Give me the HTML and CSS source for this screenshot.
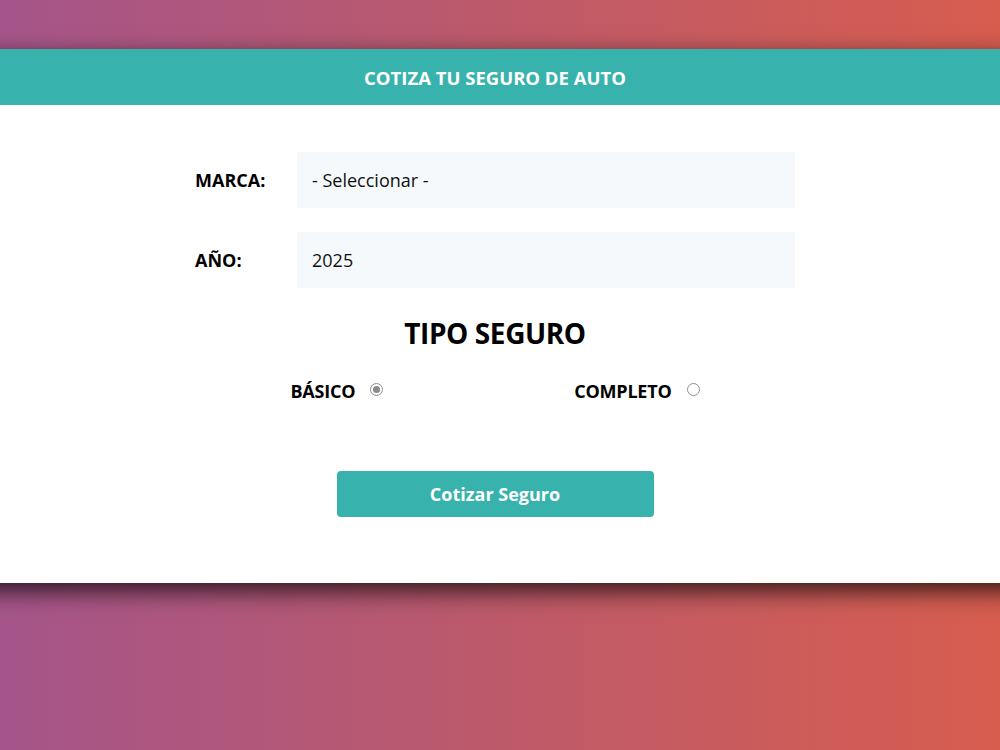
FILE: index.html
```html
<!DOCTYPE html>
<html lang="es">
<head>
<meta charset="utf-8">
<title>Cotizador</title>
<link rel="stylesheet" href="styles.css">
</head>
<body>
<div class="container">
  <header class="header">
    <h1>COTIZA TU SEGURO DE AUTO</h1>
  </header>
  <form class="form">
    <div class="field">
      <label class="label" for="marca">MARCA:</label>
      <div class="input">- Seleccionar -</div>
    </div>
    <div class="field">
      <label class="label" for="year">AÑO:</label>
      <div class="input">2025</div>
    </div>
    <h2 class="title">TIPO SEGURO</h2>
    <div class="radios">
      <label class="radio-item">BÁSICO <input type="radio" name="tipo" class="radio" checked></label>
      <label class="radio-item">COMPLETO <input type="radio" name="tipo" class="radio"></label>
    </div>
    <div class="actions">
      <button type="button" class="btn">Cotizar Seguro</button>
    </div>
  </form>
</div>
</body>
</html>
```

FILE: styles.css
```css
* { box-sizing: border-box; }
html, body { margin: 0; padding: 0; }
body {
  height: 750px;
  background: linear-gradient(to right, #a5558a 0%, #bd5a6a 50%, #d75d4f 100%);
  font-family: "Open Sans", "Noto Sans", sans-serif;
  padding-top: 49px;
  overflow: hidden;
}
.container {
  background: #fff;
  height: 534px;
  margin: 0 -40px;
  padding: 0 40px;
  box-shadow: 0 8px 22px rgba(0, 0, 0, 0.75);
}
.header {
  background: #38b2ac;
  height: 56px;
  margin: 0 -40px;
  display: flex;
  align-items: center;
  justify-content: center;
  padding-right: 10px;
}
.header h1 {
  margin: 0;
  color: #fff;
  font-size: 18.5px;
  font-weight: 700;
}
.form {
  width: 600px;
  margin-left: 195px;
  padding-top: 47px;
}
.field {
  display: flex;
  align-items: center;
  margin-bottom: 24px;
}
.label {
  width: 102px;
  font-weight: 700;
  font-size: 18px;
  color: #000;
}
.input {
  flex: 1;
  height: 56px;
  background: #f5f9fc;
  display: flex;
  align-items: center;
  padding-left: 15px;
  font-size: 18px;
  color: #111;
}
.title {
  margin: 8px 0 0;
  text-align: center;
  font-size: 28px;
  font-weight: 700;
  line-height: 42px;
  letter-spacing: -0.4px;
}
.radios {
  display: flex;
  justify-content: space-around;
  margin-top: 21px;
  height: 32px;
  align-items: center;
}
.radio-item {
  display: flex;
  align-items: center;
  font-weight: 700;
  font-size: 18px;
  letter-spacing: -0.2px;
}
.radio {
  appearance: none;
  -webkit-appearance: none;
  width: 13px;
  height: 13px;
  border: 1px solid #8f8f8f;
  border-radius: 50%;
  margin: 0 0 4px 15px;
  background: #fff;
  position: relative;
}
.radio:checked::after {
  content: "";
  position: absolute;
  left: 2px;
  top: 2px;
  width: 7px;
  height: 7px;
  border-radius: 50%;
  background: #8a8a8a;
}
.actions {
  display: flex;
  justify-content: center;
  margin-top: 64px;
}
.btn {
  width: 317px;
  height: 46px;
  background: #38b2ac;
  border: none;
  border-radius: 4px;
  color: #fff;
  font-family: inherit;
  font-size: 18px;
  font-weight: 700;
}
```
